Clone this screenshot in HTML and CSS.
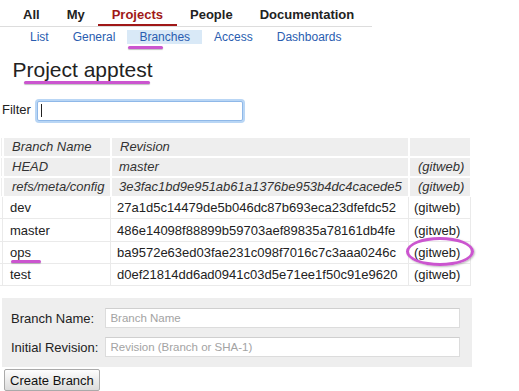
FILE: index.html
```html
<!DOCTYPE html>
<html lang="en">
  <head>
    <meta charset="UTF-8" />
    <meta name="viewport" content="width=device-width, initial-scale=1.0" />
    <title>Project apptest - Branches</title>
    <link rel="stylesheet" href="styles.css">
  </head>
  <body>
    <div class="top-menu">
      <a class="top-item" href="#">All</a>
      <a class="top-item" href="#">My</a>
      <a class="top-item selected" href="#">Projects</a>
      <a class="top-item" href="#">People</a>
      <a class="top-item" href="#">Documentation</a>
    </div>
    <div class="sub-menu">
      <a class="sub-item" href="#">List</a>
      <a class="sub-item" href="#">General</a>
      <a class="sub-item active" href="#">Branches</a>
      <a class="sub-item" href="#">Access</a>
      <a class="sub-item" href="#">Dashboards</a>
    </div>

    <h1 class="project-title">Project apptest</h1>

    <div class="filter-row">
      <label class="filter-label" for="filter">Filter</label>
      <span class="filter-box">
        <input id="filter" class="filter-input" type="text">
        <span class="caret"></span>
      </span>
    </div>

    <table class="branch-table">
      <thead>
        <tr class="header-row">
          <th class="icon-cell"></th>
          <th class="name-col">Branch Name</th>
          <th class="rev-col">Revision</th>
          <th class="link-col"></th>
        </tr>
      </thead>
      <tbody>
        <tr class="special-row">
          <td class="icon-cell"></td>
          <td>HEAD</td>
          <td>master</td>
          <td><a href="#">(gitweb)</a></td>
        </tr>
        <tr class="special-row">
          <td class="icon-cell"></td>
          <td>refs/meta/config</td>
          <td>3e3fac1bd9e951ab61a1376be953b4dc4cacede5</td>
          <td><a href="#">(gitweb)</a></td>
        </tr>
        <tr class="data-row">
          <td class="icon-cell"></td>
          <td>dev</td>
          <td>27a1d5c14479de5b046dc87b693eca23dfefdc52</td>
          <td><a href="#">(gitweb)</a></td>
        </tr>
        <tr class="data-row">
          <td class="icon-cell"></td>
          <td>master</td>
          <td>486e14098f88899b59703aef89835a78161db4fe</td>
          <td><a href="#">(gitweb)</a></td>
        </tr>
        <tr class="data-row">
          <td class="icon-cell"></td>
          <td>ops</td>
          <td>ba9572e63ed03fae231c098f7016c7c3aaa0246c</td>
          <td><a href="#">(gitweb)</a></td>
        </tr>
        <tr class="data-row">
          <td class="icon-cell"></td>
          <td>test</td>
          <td>d0ef21814dd6ad0941c03d5e71ee1f50c91e9620</td>
          <td><a href="#">(gitweb)</a></td>
        </tr>
      </tbody>
    </table>

    <div class="add-branch">
      <label class="add-label" for="branch-name">Branch Name:</label>
      <input id="branch-name" class="add-input" type="text" placeholder="Branch Name">
      <label class="add-label" for="initial-rev">Initial Revision:</label>
      <input id="initial-rev" class="add-input" type="text" placeholder="Revision (Branch or SHA-1)">
    </div>
    <button class="create-button" type="button">Create Branch</button>

    <!-- hand-drawn highlight marks over the screenshot -->
    <span class="mark mark-branches"></span>
    <span class="mark mark-title"></span>
    <span class="mark mark-ops"></span>
    <span class="mark-ring"></span>
  </body>
</html>
```

FILE: styles.css
```css
html, body {
  margin: 0;
  padding: 0;
}
body {
  position: relative;
  font-family: 'Liberation Sans', Arial, Helvetica, sans-serif;
  font-size: 13px;
  color: #222;
  background: #fff;
}
a {
  text-decoration: none;
  color: inherit;
}

/* top menu */
.top-menu {
  display: inline-flex;
  padding: 0 4px 0 9.5px;
  border-bottom: 1px solid #ddd;
}
.top-item {
  padding: 7px 13.5px 1px;
  line-height: 16px;
  font-weight: bold;
  color: #222;
  border-bottom: 2px solid transparent;
}
.top-item.selected {
  color: #a01818;
  border-bottom-color: #a01818;
}

/* sub menu */
.sub-menu {
  display: flex;
  margin-top: 3px;
  padding-left: 18px;
}
.sub-item {
  padding: 0 12px;
  line-height: 14px;
  font-size: 12px;
  color: #2a5db0;
}
.sub-item.active {
  background: #d9e9f7;
}

.project-title {
  margin: 14px 0 0;
  padding-left: 12.5px;
  font-size: 21px;
  line-height: 24px;
  font-weight: normal;
  color: #222;
}

/* filter */
.filter-row {
  display: flex;
  align-items: flex-start;
  margin-top: 19px;
  padding-left: 2px;
}
.filter-label {
  line-height: 15px;
  margin-top: 1px;
  margin-right: 6px;
}
.filter-box {
  position: relative;
  display: block;
}
.filter-input {
  display: block;
  box-sizing: border-box;
  width: 206px;
  height: 20px;
  margin: 0;
  border: 1px solid #8fb8e8;
  border-radius: 2px;
  box-shadow: 0 0 0 2px #b9d6f5;
  outline: none;
}
.caret {
  position: absolute;
  left: 4px;
  top: 3px;
  width: 1px;
  height: 13px;
  background: #222;
}

/* branches */
.branch-table {
  margin-top: 16px;
  width: 471px;
  table-layout: fixed;
  border-collapse: separate;
  border-spacing: 0;
  white-space: nowrap;
}
.branch-table th,
.branch-table td {
  box-sizing: border-box;
  padding: 1px 0 1px 7px;
  line-height: 16px;
  text-align: left;
  overflow: hidden;
}
.branch-table .icon-cell {
  width: 3px;
  padding: 0;
}
.branch-table .name-col { width: 108px; padding-left: 8px; }
.branch-table .rev-col { width: 298px; padding-left: 8px; }
.branch-table .link-col { width: 62px; }
.branch-table td:nth-child(3) { padding-left: 6px; }
.branch-table td:nth-child(4) { padding-left: 5px; }

.header-row th,
.special-row td {
  background: #eee;
  border: 1px solid #fff;
  font-weight: normal;
  font-style: italic;
  color: #333;
}
.special-row td:nth-child(2) { padding-left: 8px; }
.special-row td:nth-child(3) { padding-left: 7px; }
.special-row td:nth-child(4) { padding-left: 8px; }
.data-row td {
  padding-top: 3px;
  padding-bottom: 2px;
  border-right: 1px solid #eaeaea;
  border-bottom: 1px solid #eaeaea;
}
.data-row:nth-child(4) td {
  padding-top: 4px;
}

/* add branch */
.add-branch {
  display: grid;
  grid-template-columns: auto 1fr;
  column-gap: 7px;
  row-gap: 9px;
  align-items: center;
  width: 470px;
  box-sizing: border-box;
  margin: 12px 0 0 2px;
  padding: 10px 12px 10px 9px;
  background: #eee;
}
.add-input {
  box-sizing: border-box;
  height: 20px;
  margin: 0;
  padding: 0 4px;
  border: 1px solid #dcdcdc;
  border-top-color: #cfcfcf;
  font-family: inherit;
  font-size: 11.5px;
  background: #fff;
}
.add-input::placeholder {
  color: #a3a3a3;
}

.create-button {
  display: block;
  margin: 2px 0 0 4px;
  height: 22px;
  padding: 0 5px;
  border: 1px solid #aaa;
  border-radius: 2px;
  background: linear-gradient(to bottom, #fdfdfd, #dcdcdc);
  font-family: inherit;
  font-size: 13px;
  color: #111;
}

/* annotation marks */
.mark {
  position: absolute;
  height: 3px;
  border-radius: 2px;
  background: #cb55cf;
  box-shadow: 0 1px 1px rgba(0, 0, 0, 0.25);
}
.mark-branches { left: 128px; top: 46px; width: 35px; }
.mark-title { left: 24px; top: 81px; width: 126px; }
.mark-ops { left: 11px; top: 260px; width: 30px; }
.mark-ring {
  position: absolute;
  left: 406px;
  top: 237px;
  width: 62px;
  height: 23px;
  border: 3px solid #cb55cf;
  border-radius: 50%;
  box-shadow: 1px 1px 2px rgba(0, 0, 0, 0.25);
}
```
